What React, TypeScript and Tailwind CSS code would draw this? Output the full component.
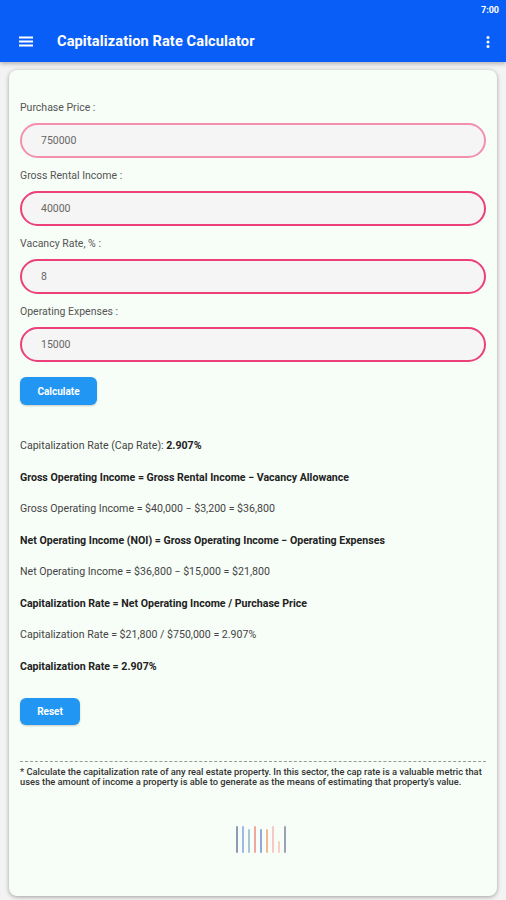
import { useState } from "react";

const fields = [
  { label: "Purchase Price :", value: "750000", border: "border-[#f48fb1]" },
  { label: "Gross Rental Income :", value: "40000", border: "border-[#ec407a]" },
  { label: "Vacancy Rate, % :", value: "8", border: "border-[#ec407a]" },
  { label: "Operating Expenses :", value: "15000", border: "border-[#ec407a]" },
];

const results = [
  { text: "Capitalization Rate (Cap Rate): ", strong: "2.907%", bold: false },
  { text: "Gross Operating Income = Gross Rental Income − Vacancy Allowance", bold: true },
  { text: "Gross Operating Income = $40,000 − $3,200 = $36,800", bold: false },
  { text: "Net Operating Income (NOI) = Gross Operating Income − Operating Expenses", bold: true },
  { text: "Net Operating Income = $36,800 − $15,000 = $21,800", bold: false },
  { text: "Capitalization Rate = Net Operating Income / Purchase Price", bold: true },
  { text: "Capitalization Rate = $21,800 / $750,000 = 2.907%", bold: false },
  { text: "Capitalization Rate = 2.907%", bold: true },
];

const bars = [
  { c: "#8e9ab8", h: 27 },
  { c: "#9fb8e6", h: 27 },
  { c: "#a9c6d9", h: 24 },
  { c: "#eea8a0", h: 27 },
  { c: "#8fa6de", h: 24 },
  { c: "#f3b994", h: 24 },
  { c: "#f6c9c4", h: 27 },
  { c: "#f8cfc0", h: 12 },
  { c: "#9aa2b4", h: 27 },
];

export default function App() {
  const [vals] = useState(fields.map((f) => f.value));
  return (
    <div className="w-[506px] h-[900px] overflow-hidden bg-[#f3f3f3] font-['Roboto',sans-serif]">
      <header className="bg-[#0a5ef8] h-[62px] shadow-[0_2px_4px_rgba(0,0,0,0.25)] text-white">
        <div className="h-[22px] flex justify-end items-center pr-[7px] text-[9px] font-bold">7:00</div>
        <div className="h-[40px] flex items-center pl-[19px] pr-[16px]">
          <svg width="14" height="11" viewBox="0 0 14 11" className="mb-[1px]">
            <rect x="0" y="0.5" width="14" height="2" fill="white" />
            <rect x="0" y="4.5" width="14" height="2" fill="white" />
            <rect x="0" y="8.5" width="14" height="2" fill="white" />
          </svg>
          <h1 className="ml-[24px] text-[14.6px] font-bold tracking-[0.1px] flex-1">Capitalization Rate Calculator</h1>
          <svg width="4" height="12" viewBox="0 0 4 12">
            <circle cx="2" cy="1.5" r="1.5" fill="white" />
            <circle cx="2" cy="6" r="1.5" fill="white" />
            <circle cx="2" cy="10.5" r="1.5" fill="white" />
          </svg>
        </div>
      </header>

      <main className="mx-[9px] mt-[8px] h-[826px] rounded-[8px] bg-[#f7fdf7] shadow-[0_1px_4px_rgba(0,0,0,0.35)] px-[11px] pt-[31px]">
        <div className="flex flex-col gap-[11px]">
          {fields.map((f, i) => (
            <div key={f.label} className="flex flex-col gap-[8px]">
              <label className="text-[10.5px] text-[#555] leading-[14px]">{f.label}</label>
              <div
                className={`h-[35px] rounded-full border-2 ${f.border} bg-[#f5f5f5] flex items-center pl-[19px] text-[10.5px] text-[#666]`}
              >
                {vals[i]}
              </div>
            </div>
          ))}
        </div>

        <button className="mt-[15px] w-[77px] h-[28px] rounded-[6px] bg-[#2196f3] text-white text-[10px] font-bold shadow-[0_1px_2px_rgba(0,0,0,0.2)]">
          Calculate
        </button>

        <div className="mt-[34px] flex flex-col gap-[17.5px]">
          {results.map((r, i) => (
            <p
              key={i}
              className={`text-[10.6px] leading-[14px] ${r.bold ? "font-bold text-[#222]" : "text-[#444]"}`}
            >
              {r.text}
              {r.strong && <span className="font-bold text-[#222]">{r.strong}</span>}
            </p>
          ))}
        </div>

        <button className="mt-[24px] w-[60px] h-[27px] rounded-[6px] bg-[#2196f3] text-white text-[10px] font-bold shadow-[0_1px_2px_rgba(0,0,0,0.2)]">
          Reset
        </button>

        <div className="mt-[36px] border-t border-dashed border-[#999]" />
        <p className="mt-[5px] text-[9.3px] leading-[10px] font-medium text-[#333]">
          * Calculate the capitalization rate of any real estate property. In this sector, the cap rate is a valuable metric that uses the amount of income a property is able to generate as the means of estimating that property's value.
        </p>

        <div className="mt-[39px] pl-[16px] flex justify-center items-end gap-[4px] h-[27px]">
          {bars.map((b, i) => (
            <div key={i} className="w-[2px] rounded-full" style={{ backgroundColor: b.c, height: b.h }} />
          ))}
        </div>
      </main>
    </div>
  );
}
